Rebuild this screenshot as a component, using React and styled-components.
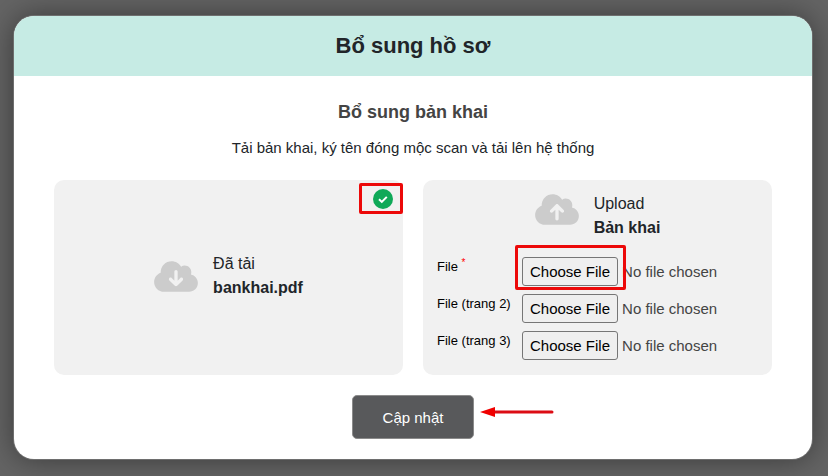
import React from 'react'
import styled, { createGlobalStyle } from 'styled-components'
import { FaCloudArrowDown, FaCloudArrowUp } from 'react-icons/fa6'

const GlobalStyle = createGlobalStyle`
*{
box-sizing:border-box;
}
body{
margin:0;
background:#646464;
font-family:"Liberation Sans", Arial, sans-serif;
color:#212529;
}
`

const Overlay = styled.div`
display:flex;
align-items:flex-start;
min-height:100vh;
padding:16px 16px 16px 14px;
overflow:hidden;
`

const Modal = styled.div`
flex:1;
min-width:0;
background:white;
border-radius:20px;
overflow:hidden;
box-shadow:0 0 0 1px #6e6e6e, 0 0 30px rgba(0,0,0,0.45);
`

const Header = styled.header`
display:flex;
align-items:center;
justify-content:center;
height:60px;
background:#c6ebe4;
`

const Title = styled.h1`
margin:0;
font-size:22px;
line-height:24px;
font-weight:bold;
`

const Body = styled.div`
padding:24px 40px 20px;
text-align:center;
`

const SubTitle = styled.h2`
margin:0 0 12px;
font-size:18px;
line-height:24px;
font-weight:bold;
color:#444;
`

const Text = styled.p`
margin:0 0 20px;
font-size:15px;
line-height:24px;
`

const Cards = styled.div`
display:grid;
grid-template-columns:1fr 1fr;
gap:20px;
margin-bottom:20px;
text-align:left;
`

const Card = styled.section`
position:relative;
display:flex;
flex-direction:column;
justify-content:center;
padding:12px 14px 15px;
background:#f1f1f1;
border-radius:10px;
`

const FileInfo = styled.div`
display:flex;
align-items:${props => props.$align || 'center'};
justify-content:center;
gap:15px;
font-size:16px;
line-height:24px;

svg{
width:44px;
height:35px;
color:#ccc;
}
`

const FileName = styled.strong`
display:block;
`

const Done = styled.div`
position:absolute;
top:3px;
right:0;
display:flex;
align-items:center;
justify-content:center;
width:44px;
height:31px;
padding-left:4px;
border:3px solid #ec0909;
border-radius:2px;
`

const Rows = styled.div`
display:grid;
gap:8px;
margin-top:17px;
`

const Row = styled.div`
display:grid;
grid-template-columns:85px 1fr;
align-items:start;
`

const Label = styled.label`
font-size:13px;
line-height:20px;
color:black;
`

const Star = styled.sup`
font-size:10px;
line-height:0;
color:red;
`

const Field = styled.div`
position:relative;
min-width:0;
`

const FileInput = styled.input`
display:block;
width:100%;
font-family:inherit;
font-size:15px;
color:#444;

&::file-selector-button{
height:29px;
margin:0 4px 0 0;
padding:0 7px;
font:inherit;
color:black;
background:#efefef;
border:1px solid #767676;
border-radius:3px;
}
`

const Mark = styled.span`
position:absolute;
top:-12px;
left:-7px;
width:111px;
height:45px;
border:3px solid #ec0909;
border-radius:2px;
pointer-events:none;
`

const Action = styled.div`
position:relative;
display:inline-block;
vertical-align:top;
`

const Btn = styled.button`
display:block;
height:44px;
padding:0 30px;
font-family:inherit;
font-size:15px;
color:white;
background:#58595b;
border:1px solid #8b8b8b;
border-radius:5px;
`

const Arrow = styled.svg`
position:absolute;
top:11px;
left:100%;
margin-left:6px;
`

const files = [
  { id: 'file1', label: 'File', required: true },
  { id: 'file2', label: 'File (trang 2)' },
  { id: 'file3', label: 'File (trang 3)' },
]

const App = () => {
  return (
    <>
      <GlobalStyle/>
      <Overlay>
        <Modal role="dialog" aria-labelledby="title">
          <Header>
            <Title id="title">Bổ sung hồ sơ</Title>
          </Header>
          <Body>
            <SubTitle>Bổ sung bản khai</SubTitle>
            <Text>Tải bản khai, ký tên đóng mộc scan và tải lên hệ thống</Text>
            <Cards>
              <Card>
                <Done>
                  <svg width="20" height="20" viewBox="0 0 20 20">
                    <circle cx="10" cy="10" r="10" fill="#0fa958"/>
                    <path d="M6 10.2l2.8 2.7 5-5" fill="none" stroke="white" strokeWidth="2"/>
                  </svg>
                </Done>
                <FileInfo>
                  <FaCloudArrowDown/>
                  <div>
                    Đã tải
                    <FileName>bankhai.pdf</FileName>
                  </div>
                </FileInfo>
              </Card>
              <Card>
                <FileInfo $align="flex-start">
                  <FaCloudArrowUp/>
                  <div>
                    Upload
                    <FileName>Bản khai</FileName>
                  </div>
                </FileInfo>
                <Rows>
                  {files.map((file) => (
                    <Row key={file.id}>
                      <Label htmlFor={file.id}>{file.label} {file.required && <Star>*</Star>}</Label>
                      <Field>
                        <FileInput type="file" id={file.id}/>
                        {file.required && <Mark/>}
                      </Field>
                    </Row>
                  ))}
                </Rows>
              </Card>
            </Cards>
            <Action>
              <Btn type="button">Cập nhật</Btn>
              <Arrow width="75" height="12" viewBox="0 0 75 12">
                <path d="M12 6H72" stroke="#dc0c14" strokeWidth="3" strokeLinecap="round"/>
                <path d="M0 6L15 1V11Z" fill="#f00000"/>
              </Arrow>
            </Action>
          </Body>
        </Modal>
      </Overlay>
    </>
  )
}

export default App
